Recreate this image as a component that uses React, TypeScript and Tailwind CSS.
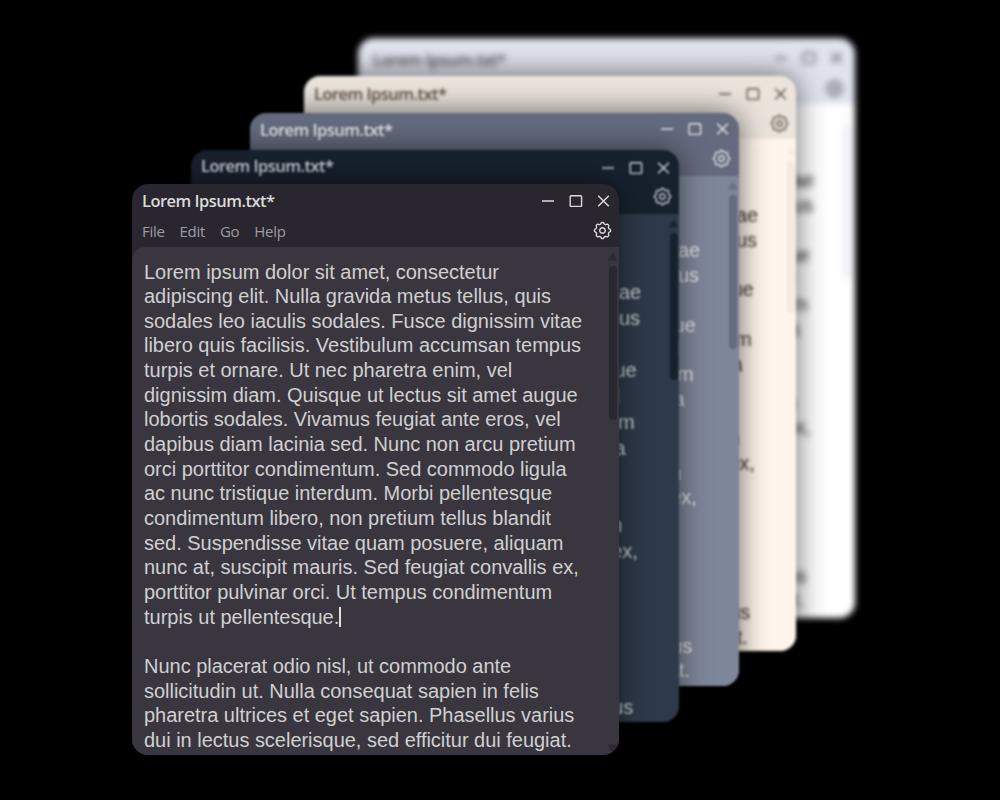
const TEXT = [
  "Lorem ipsum dolor sit amet, consectetur",
  "adipiscing elit. Nulla gravida metus tellus, quis",
  "sodales leo iaculis sodales. Fusce dignissim vitae",
  "libero quis facilisis. Vestibulum accumsan tempus",
  "turpis et ornare. Ut nec pharetra enim, vel",
  "dignissim diam. Quisque ut lectus sit amet augue",
  "lobortis sodales. Vivamus feugiat ante eros, vel",
  "dapibus diam lacinia sed. Nunc non arcu pretium",
  "orci porttitor condimentum. Sed commodo ligula",
  "ac nunc tristique interdum. Morbi pellentesque",
  "condimentum libero, non pretium tellus blandit",
  "sed. Suspendisse vitae quam posuere, aliquam",
  "nunc at, suscipit mauris. Sed feugiat convallis ex,",
  "porttitor pulvinar orci. Ut tempus condimentum",
  "turpis ut pellentesque.",
  "",
  "Nunc placerat odio nisl, ut commodo ante",
  "sollicitudin ut. Nulla consequat sapien in felis",
  "pharetra ultrices et eget sapien. Phasellus varius",
  "dui in lectus scelerisque, sed efficitur dui feugiat.",
];

// Outline of an eight-toothed cog, centred on the origin.
const COG =
  Array.from({ length: 96 }, (_, i) => {
    const a = (i / 96) * Math.PI * 2;
    const r = 7.35 + 0.85 * Math.tanh(1.5 * Math.cos(8 * a));
    return `${i ? "L" : "M"}${(r * Math.cos(a)).toFixed(2)} ${(r * Math.sin(a)).toFixed(2)}`;
  }).join("") + "Z";

type Theme = {
  frame: string;
  title: string;
  header: string;
  controls: string;
  gear: string;
  panel: string;
  rail: string;
  thumb: string;
  text: string;
};

const WINDOWS: Theme[] = [
  {
    frame: "left-[358px] top-[38px] w-[497px] h-[580px] bg-[#e1e4ee] text-[#44484e] blur-[3px]",
    header: "h-[66px]",
    title: "pl-[15px] pt-[10px]",
    controls: "pt-[14px] pr-[12px]",
    gear: "pr-[11px] pt-[21px]",
    panel: "bg-[#ffffff]",
    rail: "pr-[4px] pt-[8px] text-[#f3f5f9]",
    thumb: "h-[154px] bg-[#eef0f6]",
    text: "pt-[15px] pl-[18px] leading-[24.7px] text-[#222222]",
  },
  {
    frame: "left-[304px] top-[76px] w-[492px] h-[575px] bg-[#ebe4dd] text-[#5a4c42] blur-[1.6px] shadow-[0_0_30px_rgba(0,0,0,0.6)]",
    header: "h-[63px]",
    title: "pl-[10px] pt-[6px]",
    controls: "pt-[12px] pr-[9px]",
    gear: "pr-[7px] pt-[20px]",
    panel: "bg-[#fff5ec]",
    rail: "pr-px pt-[8px] text-[#f6ece3]",
    thumb: "h-[154px] bg-[#f3eae1]",
    text: "pt-[14px] pl-[16px] leading-[24.85px] text-[#3f352e]",
  },
  {
    frame: "left-[250px] top-[113px] w-[489px] h-[573px] bg-[#646b7e] text-[#e2e4e9] blur-[1px] shadow-[0_0_30px_rgba(0,0,0,0.6)]",
    header: "h-[63px]",
    title: "pl-[10px] pt-[5px]",
    controls: "pt-[10px] pr-[10px]",
    gear: "pr-[8px] pt-[20px]",
    panel: "bg-[#7e8699]",
    rail: "pr-[2px] pt-[6px] text-[#6a7184]",
    thumb: "h-[154px] bg-[#646b7e]",
    text: "pt-[13px] pl-[12px] leading-[24.7px] text-[#e2e4e9]",
  },
  {
    frame: "left-[191px] top-[150px] w-[488px] h-[572px] bg-[#17212d] text-[#cbcfd4] blur-[0.8px] shadow-[0_0_30px_rgba(0,0,0,0.55)]",
    header: "h-[64px]",
    title: "pl-[10px] pt-[4px]",
    controls: "pt-[12px] pr-[9px]",
    gear: "pr-[7px] pt-[19px]",
    panel: "bg-[#2e3949]",
    rail: "pr-px pt-[6px] text-[#1b2531]",
    thumb: "h-[147px] bg-[#17212d]",
    text: "pt-[14.5px] pl-[12px] leading-[25.9px] text-[#c6cbd2]",
  },
  {
    frame: "left-[132px] top-[184px] w-[487px] h-[571px] bg-[#29262f] text-[#dadada] shadow-[0_0_30px_rgba(0,0,0,0.55)]",
    header: "h-[63px]",
    title: "pl-[10px] pt-[5px]",
    controls: "pt-[11px] pr-[9px]",
    gear: "pr-[7px] pt-[20px]",
    panel: "bg-[#393640]",
    rail: "pr-[2px] pt-[6px] text-[#2c2932]",
    thumb: "h-[154px] bg-[#2a2730]",
    text: "pt-[12.5px] pl-[12px] leading-[24.65px] text-[#d0d0d0]",
  },
];

function Editor({ theme, front }: { theme: Theme; front: boolean }) {
  return (
    <section className={`absolute flex flex-col overflow-hidden rounded-[16px] ${theme.frame}`}>
      <header className={`flex shrink-0 justify-between ${theme.header}`}>
        <div className={`flex flex-col font-['Open_Sans','Noto_Sans',sans-serif] ${theme.title}`}>
          <h1 className="whitespace-nowrap text-[16.5px] font-semibold leading-6 tracking-[-0.52px]">Lorem Ipsum.txt*</h1>
          <nav className="mt-[7px] flex gap-[15px] text-[15px] font-medium leading-[22px] tracking-[-0.3px] text-[#9b9da6]">
            <span>File</span>
            <span>Edit</span>
            <span>Go</span>
            <span>Help</span>
          </nav>
        </div>
        <div className="flex flex-col items-end">
          <div className={`flex gap-[14px] ${theme.controls}`}>
            <svg className="h-3 w-[14px]" viewBox="0 0 14 12" stroke="currentColor" strokeWidth="1.5">
              <path d="M1 6h12" />
            </svg>
            <svg className="h-3 w-[14px]" viewBox="0 0 14 12" fill="none" stroke="currentColor" strokeWidth="1.4">
              <rect x="1.2" y="0.7" width="11.4" height="10.8" rx="1" />
            </svg>
            <svg className="h-3 w-[13px]" viewBox="0 0 13 12" stroke="currentColor" strokeWidth="1.5">
              <path d="M1.2 0.7 11.8 11.3M11.8 0.7 1.2 11.3" />
            </svg>
          </div>
          <div className={theme.gear}>
            <svg className="-mt-[6px] size-[19px]" viewBox="-9.5 -9.5 19 19" fill="none" stroke="currentColor" strokeWidth="1.4">
              <path d={COG} strokeLinejoin="round" />
              <circle r="2.8" />
            </svg>
          </div>
        </div>
      </header>
      <div className={`flex min-h-0 flex-1 justify-between overflow-hidden ${front ? "rounded-tl-[13px]" : ""} ${theme.panel}`}>
        <div className={`whitespace-pre font-['Liberation_Sans',Arial,sans-serif] text-[20px] tracking-[-0.02px] ${theme.text}`}>
          {TEXT.map((line, i) => (
            <p key={i} className="flex min-h-[1lh] items-center">
              {line}
              {front && i === 14 && <span className="h-5 w-[2px] bg-[#e0e0e0]" />}
            </p>
          ))}
        </div>
        <div className={`flex flex-col items-center ${theme.rail}`}>
          <svg className="h-[8px] w-[9px]" viewBox="0 0 9 8" fill="currentColor">
            <path d="M4.5 0Q5 0 5.4.7L8.7 6Q9.3 7.5 8 7.5H1Q-.3 7.5.3 6L3.6.7Q4 0 4.5 0Z" />
          </svg>
          <div className={`mt-[5px] w-[8px] shrink-0 rounded-full ${theme.thumb}`} />
          {front && (
            <svg className="mb-[3px] mt-auto h-[8px] w-[9px]" viewBox="0 0 9 8" fill="currentColor">
              <path d="M4.5 8Q5 8 5.4 7.3L8.7 2Q9.3.5 8 .5H1Q-.3.5.3 2L3.6 7.3Q4 8 4.5 8Z" />
            </svg>
          )}
        </div>
      </div>
    </section>
  );
}

export default function App() {
  return (
    <main className="relative h-[800px] w-[1000px] overflow-hidden bg-black">
      {WINDOWS.map((theme, i) => (
        <Editor key={i} theme={theme} front={i === WINDOWS.length - 1} />
      ))}
    </main>
  );
}
